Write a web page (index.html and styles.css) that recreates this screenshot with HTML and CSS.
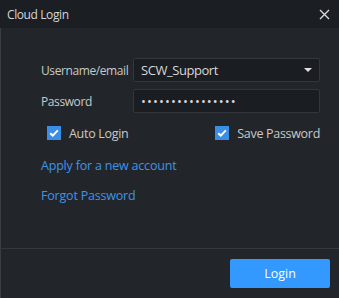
FILE: index.html
```html
<!DOCTYPE html>
<html lang="en">

<head>
    <link rel="stylesheet" href="styles.css">
    <title>Cloud Login</title>
</head>

<body>
    <div class="dialog">
        <div class="titlebar">
            <span class="title">Cloud Login</span>
            <svg class="close" width="11" height="11" viewBox="0 0 11 11">
                <path d="M1 1L10 10M10 1L1 10" stroke="#d8d8d8" stroke-width="1.4" fill="none" />
            </svg>
        </div>
        <div class="content">
            <div class="row">
                <span class="label">Username/email</span>
                <div class="field">
                    <span class="value">SCW_Support</span>
                    <svg class="arrow" width="8" height="4" viewBox="0 0 8 4">
                        <path d="M0 0H8L4 4Z" fill="#e0e0e0" />
                    </svg>
                </div>
            </div>
            <div class="row">
                <span class="label">Password</span>
                <div class="field">
                    <span class="dots">&bull;&bull;&bull;&bull;&bull;&bull;&bull;&bull;&bull;&bull;&bull;&bull;&bull;&bull;&bull;&bull;</span>
                </div>
            </div>
            <div class="checks">
                <label class="check">
                    <svg class="box" width="14" height="14" viewBox="0 0 14 14">
                        <rect width="14" height="14" fill="#3a8ee6" />
                        <path d="M3.2 7.2L5.8 9.6L10.8 4.4" stroke="#fff" stroke-width="2" fill="none" />
                    </svg>
                    Auto Login
                </label>
                <label class="check">
                    <svg class="box" width="14" height="14" viewBox="0 0 14 14">
                        <rect width="14" height="14" fill="#3a8ee6" />
                        <path d="M3.2 7.2L5.8 9.6L10.8 4.4" stroke="#fff" stroke-width="2" fill="none" />
                    </svg>
                    Save Password
                </label>
            </div>
            <a class="link" href="#">Apply for a new account</a>
            <a class="link" href="#">Forgot Password</a>
        </div>
        <div class="footer">
            <button class="login">Login</button>
        </div>
    </div>
</body>

</html>
```

FILE: styles.css
```css
* {
    box-sizing: border-box;
    margin: 0;
    padding: 0;
}

body {
    width: 339px;
    height: 298px;
    background: #22262a;
    font-family: "Open Sans", "Noto Sans", sans-serif;
    font-size: 12px;
    color: #c9c9c9;
}

.dialog {
    display: flex;
    flex-direction: column;
    height: 298px;
}

.titlebar {
    height: 28px;
    background: #1b1e22;
    display: flex;
    align-items: center;
    justify-content: space-between;
    padding: 0 9px 0 7px;
    color: #d6d6d6;
}

.title {
    font-size: 12px;
    letter-spacing: -0.4px;
}

.content {
    flex: 1;
    border-left: 1px solid #3a3e43;
    padding: 30px 19px 0 40px;
    display: flex;
    flex-direction: column;
}

.row {
    display: flex;
    align-items: center;
    margin-bottom: 7px;
}

.label {
    width: 92px;
    letter-spacing: -0.4px;
}

.field {
    flex: 1;
    height: 24px;
    background: #1a1d21;
    border: 1px solid #33373c;
    border-radius: 2px;
    display: flex;
    align-items: center;
    justify-content: space-between;
    padding: 0 7px 0 7px;
    color: #d8d8d8;
    font-size: 13px;
    letter-spacing: -0.45px;
}

.dots {
    font-size: 13px;
    letter-spacing: 1.1px;
}

.checks {
    display: flex;
    justify-content: space-between;
    padding: 3px 0 0 6px;
    height: 33px;
}

.check {
    display: flex;
    align-items: center;
    gap: 8px;
    height: 20px;
    font-size: 12.5px;
    letter-spacing: -0.3px;
}

.link {
    color: #3d94ea;
    text-decoration: none;
    font-size: 12.5px;
    letter-spacing: -0.2px;
    line-height: 18px;
    margin-top: 4px;
    margin-bottom: 8px;
}

.footer {
    height: 50px;
    border-top: 1px solid #34383d;
    border-left: 1px solid #3a3e43;
    display: flex;
    justify-content: flex-end;
    align-items: center;
    padding-right: 9px;
}

.login {
    width: 100px;
    height: 29px;
    background: #3399ff;
    border: none;
    border-radius: 2px;
    color: #fff;
    font-family: inherit;
    font-size: 12.5px;
}
```
